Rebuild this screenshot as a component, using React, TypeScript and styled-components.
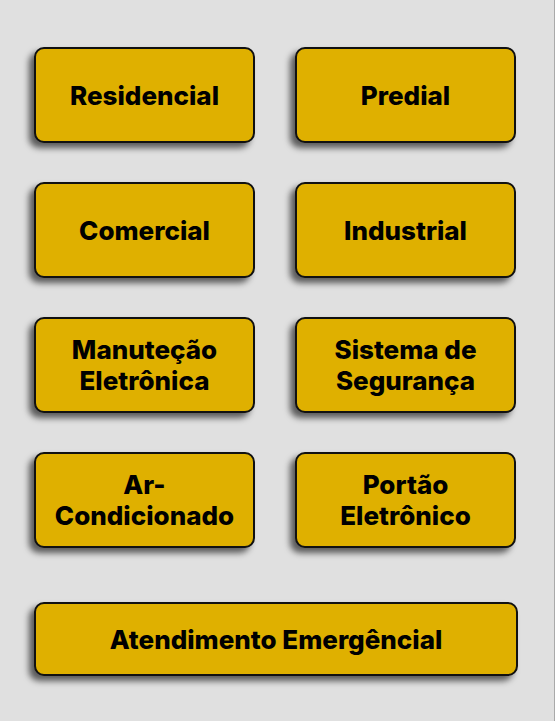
import React from "react";
import styled, { createGlobalStyle } from "styled-components";

const services = [
  "Residencial",
  "Predial",
  "Comercial",
  "Industrial",
  "Manuteção Eletrônica",
  "Sistema de Segurança",
  "Ar-Condicionado",
  "Portão Eletrônico",
];

function App() {
  return (
    <>
      <GlobalStyle />
      <Page>
        <Grid>
          {services.map((name) => (
            <ServiceButton key={name}>{name}</ServiceButton>
          ))}
        </Grid>
        <WideButton>Atendimento Emergêncial</WideButton>
      </Page>
    </>
  );
}

export default App;

const GlobalStyle = createGlobalStyle`
  * {
    box-sizing: border-box;
  }
  body {
    margin: 0;
    background: #e0e0e0;
    font-family: Inter, "Noto Sans", sans-serif;
  }
`;

const Page = styled.div`
  width: 555px;
  min-height: 100vh;
  padding: 47px 0 0 34px;
  background: #e0e0e0;
  border-right: 1px solid #a9a9a9;
`;

const Grid = styled.div`
  display: grid;
  grid-template-columns: 221px 221px;
  grid-auto-rows: 96px;
  column-gap: 40px;
  row-gap: 39px;
`;

const ServiceButton = styled.button`
  display: flex;
  align-items: center;
  justify-content: center;
  padding: 0 6px;
  background: #dfb000;
  border: 2px solid #111;
  border-radius: 10px;
  box-shadow: -5px 5px 6px rgba(0, 0, 0, 0.6);
  font-family: Inter, "Noto Sans", sans-serif;
  font-size: 26px;
  font-weight: 800;
  line-height: 31px;
  color: #000;
  text-align: center;
  cursor: pointer;
`;

const WideButton = styled(ServiceButton)`
  width: 484px;
  height: 74px;
  margin-top: 54px;
`;
